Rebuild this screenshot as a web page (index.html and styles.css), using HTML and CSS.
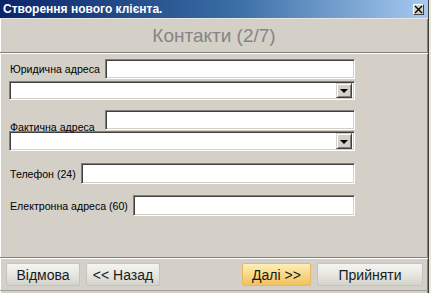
FILE: index.html
```html
<!DOCTYPE html>
<html lang="uk">
<head>
  <meta charset="UTF-8">
  <title>Створення нового клієнта</title>
  <link rel="stylesheet" href="styles.css">
</head>
<body>
  <div class="window">
    <div class="titlebar">
      <span class="title">Створення нового клієнта.</span>
      <span class="close">
        <svg width="9" height="9" viewBox="0 0 9 9"><path d="M1 1L8 8M8 1L1 8" stroke="#000" stroke-width="1.4"/></svg>
      </span>
    </div>
    <div class="step">Контакти (2/7)</div>

    <form class="fields">
      <div class="row row-first">
        <label for="legal" class="addr-label">Юридична адреса</label>
        <input type="text" id="legal" class="edit">
      </div>
      <div class="combo combo-first">
        <input type="text" class="combo-edit">
        <span class="drop"><i></i></span>
      </div>

      <div class="row row-bottom row-second">
        <label for="actual" class="addr-label">Фактична адреса</label>
        <input type="text" id="actual" class="edit">
      </div>
      <div class="combo combo-second">
        <input type="text" class="combo-edit">
        <span class="drop"><i></i></span>
      </div>

      <div class="row row-phone">
        <label for="phone">Телефон (24)</label>
        <input type="text" id="phone" class="edit">
      </div>
      <div class="row row-mail">
        <label for="mail">Електронна адреса (60)</label>
        <input type="text" id="mail" class="edit">
      </div>
    </form>

    <div class="footer">
      <button class="btn">Відмова</button>
      <button class="btn btn-back">&lt;&lt; Назад</button>
      <button class="btn btn-next">Далі &gt;&gt;</button>
      <button class="btn btn-ok">Прийняти</button>
    </div>
  </div>
</body>
</html>
```

FILE: styles.css
```css
body {
  margin: 0;
  background-color: #ece9d8;
  font-family: "Liberation Sans", Arial, sans-serif;
}
.window {
  width: 429px;
  height: 293px;
  box-sizing: border-box;
  background-color: #d4d0c8;
  border-right: 1px solid #404040;
  box-shadow: inset 1px 0 #fff, inset -1px 0 #808080;
  display: flex;
  flex-direction: column;
}
.titlebar {
  height: 18px;
  flex: none;
  display: flex;
  align-items: center;
  justify-content: space-between;
  padding: 0 3px 0 3px;
  background: linear-gradient(to right, #0a246a, #3a6ea5 55%, #a6caf0);
  color: #fff;
  font-weight: bold;
  font-size: 12px;
}
.close {
  width: 11px;
  height: 11px;
  box-sizing: border-box;
  background-color: #d4d0c8;
  border: 1px solid;
  border-color: #fff #404040 #404040 #fff;
  display: flex;
  align-items: center;
  justify-content: center;
  margin-right: 1px;
}
.step {
  height: 35px;
  flex: none;
  box-sizing: border-box;
  border-top: 1px solid #e8e6e0;
  border-bottom: 1px solid #808080;
  box-shadow: 0 1px #fff;
  text-align: center;
  line-height: 33px;
  font-size: 19px;
  color: #858585;
}
.fields {
  flex: 1;
  margin: 0;
  padding: 6px 0 0 9px;
  width: 346px;
}
.row {
  display: flex;
  align-items: center;
  gap: 5px;
  height: 20px;
  font-size: 10.6px;
}
.row label {
  padding-left: 1px;
}
.row .addr-label {
  width: 90px;
  flex: none;
}
.row-bottom {
  align-items: flex-end;
}
.row-bottom label {
  margin-bottom: -3px;
}
.row-second {
  margin-top: 10px;
}
.row-phone {
  margin-top: 12px;
  height: 21px;
}
.row-mail {
  margin-top: 11px;
  height: 21px;
}
.edit {
  flex: 1;
  min-width: 0;
  height: 100%;
  box-sizing: border-box;
  margin: 0;
  padding: 0 3px;
  border: 1px solid;
  border-color: #808080 #fff #fff #808080;
  box-shadow: inset 1px 1px #404040, inset -1px -1px #d4d0c8;
  background-color: #fff;
  outline: none;
}
.combo {
  display: flex;
  height: 19px;
  box-sizing: border-box;
  border: 1px solid;
  border-color: #808080 #fff #fff #808080;
  box-shadow: inset 1px 1px #404040, inset -1px -1px #d4d0c8;
  background-color: #fff;
  padding: 2px 2px 2px 2px;
}
.combo-first {
  margin-top: 2px;
}
.combo-second {
  margin-top: 1px;
  height: 20px;
}
.combo-edit {
  flex: 1;
  min-width: 0;
  border: none;
  padding: 0;
  outline: none;
  background: transparent;
}
.drop {
  width: 16px;
  margin: -1px 0;
  box-sizing: border-box;
  background-color: #d4d0c8;
  border: 1px solid;
  border-color: #d4d0c8 #404040 #404040 #d4d0c8;
  box-shadow: inset 1px 1px #fff, inset -1px -1px #808080;
  display: flex;
  align-items: center;
  justify-content: center;
}
.drop i {
  width: 0;
  height: 0;
  border-left: 4px solid transparent;
  border-right: 4px solid transparent;
  border-top: 4px solid #000;
  margin-top: 1px;
}
.footer {
  height: 34px;
  flex: none;
  box-sizing: border-box;
  margin-bottom: 2px;
  border-top: 1px solid #808080;
  border-bottom: 1px solid #a0a0a0;
  box-shadow: inset 0 1px #fff;
  padding: 5px 5px 0 6px;
  display: flex;
  gap: 6px;
}
.btn {
  height: 23px;
  width: 74px;
  padding: 0;
  font-family: "Liberation Sans", Arial, sans-serif;
  font-size: 14px;
  color: #1a1a1a;
  background: linear-gradient(#f4f4f2, #e4e4de 60%, #d2d2ca);
  border: 1px solid #c4c4bc;
  border-radius: 2px;
  cursor: pointer;
}
.btn-next {
  margin-left: auto;
  width: 69px;
  background: linear-gradient(#fdeeb8, #f8d584 55%, #f2c060);
  border-color: #e6b860;
}
.btn-ok {
  width: 106px;
}
```
